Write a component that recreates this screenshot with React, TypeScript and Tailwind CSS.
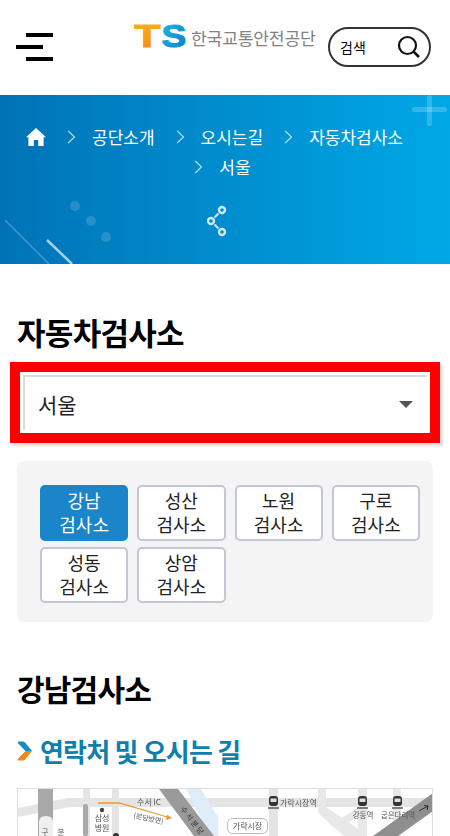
import React from "react";

const Chevron = () => (
  <svg width="9" height="14" viewBox="0 0 9 14" fill="none" className="shrink-0 opacity-70">
    <path d="M1.2 1 L7.5 7 L1.2 13" stroke="#ffffff" strokeWidth="1.2" />
  </svg>
);

const stations = ["강남", "성산", "노원", "구로", "성동", "상암"];

const Train = ({ x, y }: { x: number; y: number }) => (
  <g transform={`translate(${x} ${y})`}>
    <rect x="0" y="0" width="9" height="10" rx="3" fill="#333" />
    <rect x="1.5" y="2.5" width="6" height="3.5" fill="#ddd" />
    <path d="M-1 12 H10" stroke="#333" strokeWidth="1.2" />
  </g>
);

const MapDrawing = () => (
  <svg width="414" height="47" viewBox="0 0 414 47" className="block" style={{ fontFamily: "'Noto Sans CJK KR', sans-serif" }}>
    <rect width="414" height="47" fill="#ffffff" />
    <path d="M0 19 L50 9 H414 V18 H52 L0 28 Z" fill="#e4e4e4" />
    <rect x="65" y="0" width="7" height="47" fill="#e4e4e4" />
    <rect x="94" y="0" width="7" height="47" fill="#e4e4e4" />
    <rect x="251" y="0" width="9" height="47" fill="#e4e4e4" />
    <path d="M300 0 H308 V18 L346 44 L340 47 H326 L300 24 Z" fill="#e8e8e8" />
    <path d="M312 36 L345 16 L350 20 L320 41 Z" fill="#e8e8e8" />
    <rect x="340" y="0" width="9" height="47" fill="#e8e8e8" />
    <rect x="375" y="0" width="8" height="47" fill="#e8e8e8" />
    <path d="M168 0 H183 L200 28 L200 47 H192 Z" fill="#dfecf9" />
    <path d="M141 0 H160 L196 47 H176 Z" fill="#9a9a9a" />
    <rect x="20" y="0" width="15" height="47" fill="#a8a8a8" />
    <path d="M21 47 V33 Q21 27 28 27 Q35 27 35 33 V47 Z" fill="#efefef" />
    <rect x="65" y="15" width="5" height="32" rx="2" fill="#a9a9a9" />
    <path d="M415 4 V22 L380 47 H355 Z" fill="#8f8f8f" />
    <path d="M80 14 H101 L151 28.5" fill="none" stroke="#e89a2f" strokeWidth="1.3" />
    <path d="M149 25.5 L154 29 L148 31 Z" fill="#e89a2f" />
    <circle cx="84" cy="21" r="2.2" fill="#444" />
    <circle cx="98" cy="47" r="3" fill="#333" />
    <text x="131" y="16" fontSize="8" fill="#555" textAnchor="middle">수서 IC</text>
    <text x="130" y="32" fontSize="7" fill="#555" textAnchor="middle" transform="rotate(12 130 32)">(분당방면)</text>
    <text x="84" y="32" fontSize="8" fill="#555" textAnchor="middle">삼성</text>
    <text x="84" y="42" fontSize="8" fill="#555" textAnchor="middle">병원</text>
    <text x="27" y="46" fontSize="7.5" fill="#555" textAnchor="middle">구</text>
    <text x="43" y="46" fontSize="7.5" fill="#555" textAnchor="middle">분</text>
    <text x="172" y="33" fontSize="7.5" fill="#333" textAnchor="middle" transform="rotate(52 172 33)">수 서 분 당</text>
    <rect x="209.5" y="29.5" width="40" height="15" rx="5" fill="#fff" stroke="#bbb" />
    <text x="229.5" y="40" fontSize="8" fill="#555" textAnchor="middle">가락시장</text>
    <Train x="251" y="7" />
    <text x="262" y="17" fontSize="8" fill="#555">가락시장역</text>
    <Train x="340" y="7" />
    <Train x="375" y="7" />
    <text x="345" y="29" fontSize="7.5" fill="#555" textAnchor="middle">강동역</text>
    <text x="380" y="29" fontSize="7.5" fill="#555" textAnchor="middle">굽은다리역</text>
    <path d="M401 22 L410 17 M406 16.5 L410 17 L409 21" stroke="#222" strokeWidth="0.9" fill="none" />
  </svg>
);

export default function App() {
  return (
    <div
      className="h-[836px] w-[450px] overflow-hidden bg-white text-black"
      style={{ fontFamily: "'Noto Sans CJK KR', 'Noto Sans', sans-serif" }}
    >
      <header className="flex h-[95px] items-start bg-white">
        <div className="ml-[16px] mt-[33px] flex w-[37px] flex-col items-end gap-[8px]">
          <span className="h-[4px] w-[27px] bg-black" />
          <span className="mr-[10px] h-[4px] w-[27px] bg-black" />
          <span className="h-[4px] w-[27px] bg-black" />
        </div>
        <div className="ml-[81px] mt-[14px] flex w-[194px] shrink-0 items-start">
          <svg width="52" height="44" viewBox="0 0 52 44" className="shrink-0">
            <defs>
              <linearGradient id="tg" x1="0" y1="0" x2="0" y2="1">
                <stop offset="0" stopColor="#fdb515" />
                <stop offset="1" stopColor="#ef8a12" />
              </linearGradient>
              <linearGradient id="sg" x1="0" y1="0" x2="1" y2="1">
                <stop offset="0" stopColor="#22b8e6" />
                <stop offset="1" stopColor="#0a7fc4" />
              </linearGradient>
            </defs>
            <text transform="translate(-0.5 33) scale(1.38 1)" fontSize="32" fontWeight="700" fontFamily="'Liberation Sans', sans-serif" fill="url(#tg)" stroke="url(#tg)" strokeWidth="0.9">T</text>
            <text transform="translate(27.5 33) scale(1.16 1)" fontSize="32" fontWeight="700" fontFamily="'Liberation Sans', sans-serif" fill="url(#sg)" stroke="url(#sg)" strokeWidth="1.1">S</text>
          </svg>
          <span className="ml-[5px] mt-[14px] whitespace-nowrap text-[17.2px] leading-[20px] tracking-[-0.25px] text-[#808285]">한국교통안전공단</span>
        </div>
        <div className="mt-[27px] flex h-[40px] w-[103px] shrink-0 items-center justify-between rounded-full border-2 border-[#333] pl-[10px] pr-[8px]">
          <span className="text-[14px] leading-none">검색</span>
          <svg width="24" height="24" viewBox="0 0 24 24" fill="none">
            <circle cx="10.5" cy="10.5" r="8.5" stroke="#111" strokeWidth="2.2" />
            <path d="M16.8 16.8 L22 22" stroke="#111" strokeWidth="2.6" />
          </svg>
        </div>
      </header>

      <section className="relative h-[169px] overflow-hidden bg-gradient-to-r from-[#0073b6] to-[#00a8e6] pt-[27px]">
        <div className="pointer-events-none absolute left-0 top-0 h-full w-full">
          <span className="absolute right-[3px] top-[12px] h-[5px] w-[35px] rounded bg-white/20" />
          <span className="absolute right-[18px] top-0 h-[31px] w-[5px] rounded bg-white/20" />
          <span className="absolute left-[70px] top-[106px] h-[10px] w-[10px] rounded-full bg-white/15" />
          <span className="absolute left-[86px] top-[121px] h-[10px] w-[10px] rounded-full bg-white/15" />
          <span className="absolute left-[101px] top-[137px] h-[10px] w-[10px] rounded-full bg-white/15" />
          <svg width="90" height="60" viewBox="0 0 90 60" className="absolute bottom-0 left-0">
            <path d="M5 16 L49 60" stroke="#ffffff" strokeOpacity="0.25" strokeWidth="1.5" />
            <path d="M47 36 L72 60" stroke="#ffffff" strokeOpacity="0.65" strokeWidth="2.5" />
          </svg>
        </div>
        <div className="relative flex flex-wrap items-center justify-center text-[17px] leading-[30px] text-white">
          <svg width="20" height="18" viewBox="0 0 20 18" fill="#fff" className="mr-[21px] shrink-0">
            <path d="M10 0 L20 9.2 L17.6 9.2 V18 H12.2 V12 H7.8 V18 H2.4 V9.2 H0 Z" />
          </svg>
          {["공단소개", "오시는길", "자동차검사소", "서울"].map((c, i) => (
            <span key={c} className={`inline-flex items-center gap-[16px] ${i === 3 ? "mr-[5px]" : "mr-[21px]"}`}>
              <Chevron />
              <span>{c}</span>
            </span>
          ))}
        </div>
        <div className="relative mt-[23px] flex justify-center pr-[16px]">
          <svg width="20" height="32" viewBox="0 0 20 32" fill="none" stroke="#cfe8f6" strokeWidth="2.4">
            <circle cx="15" cy="5" r="3" />
            <circle cx="4" cy="16" r="3" />
            <circle cx="15" cy="27" r="3" />
            <path d="M11.5 8.5 L7.5 12.5 M7.5 19.5 L11.5 23.5" strokeWidth="2" />
          </svg>
        </div>
      </section>

      <main className="px-[17px]">
        <h1 className="mt-[45px] text-[31px] font-bold leading-[46px] tracking-[-0.7px]">자동차검사소</h1>
        <div className="-mx-[7px] mt-[7px] border-[10px] border-[#ff0000] bg-white shadow-[3px_3px_2px_#dddddd]">
          <div className="m-[3px] flex h-[55px] items-center justify-between border-l-2 border-t-2 border-[#dcdcdc] pl-[12px] pr-[14px] pt-[2px]">
            <span className="ml-[1px] text-[21px] leading-none text-[#222]">서울</span>
            <span className="h-0 w-0 border-x-[7px] border-t-[7px] border-x-transparent border-t-[#555]" />
          </div>
        </div>

        <div className="mt-[18px] grid grid-cols-4 gap-x-[9px] gap-y-[6px] rounded-lg bg-[#f4f4f5] pb-[19px] pl-[23px] pr-[13px] pt-[24px]">
          {stations.map((s, i) => (
            <button
              key={s}
              className={`h-[56px] rounded-[5px] border-2 pb-[2px] text-center text-[18px] leading-[24px] ${
                i === 0 ? "border-[#1a85c8] bg-[#1a85c8] text-white" : "border-[#c2c7d3] bg-white text-[#222]"
              }`}
            >
              {s}
              <br />
              검사소
            </button>
          ))}
        </div>

        <h2 className="mt-[43px] text-[30px] font-bold leading-[46px] tracking-[-0.8px]">강남검사소</h2>

        <div className="mt-[21px] flex items-center gap-[7px]">
          <svg width="16" height="20" viewBox="0 0 16 20" className="shrink-0">
            <path d="M2 0.5 H6 Q7.5 0.5 8.5 2 L15 10 H8.5 L0.8 2 Q0 0.5 2 0.5 Z" fill="#0f8cc9" />
            <path d="M15 10 L8.5 18 Q7.5 19.5 6 19.5 H2 Q0 19.5 0.8 18 L8.5 10 Z" fill="#ef8a12" />
          </svg>
          <h3 className="text-[26px] font-bold leading-[38px] tracking-[-0.8px] text-[#0f7fae]">연락처 및 오시는 길</h3>
        </div>

        <div className="mt-[18px] border border-[#dddddd] blur-[0.5px]">
          <MapDrawing />
        </div>
      </main>
    </div>
  );
}
